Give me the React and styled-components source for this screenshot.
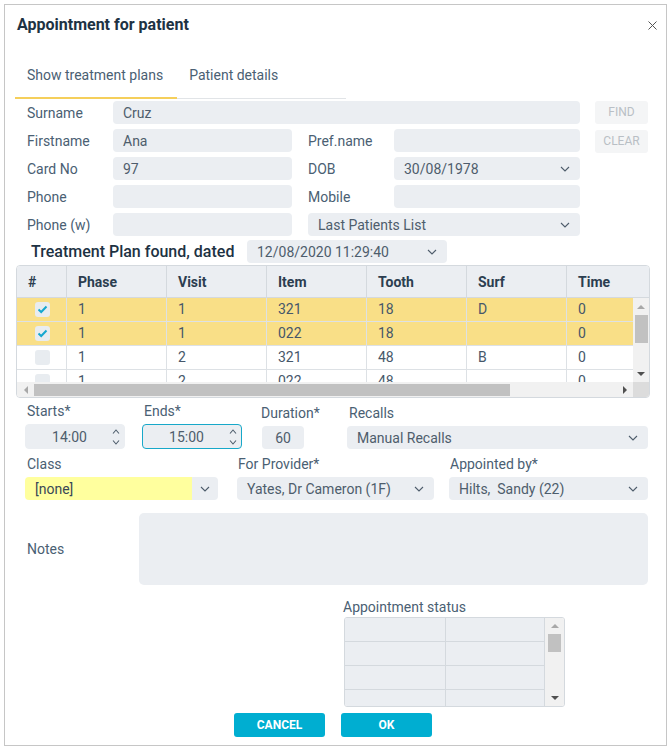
import React from 'react'
import styled, { createGlobalStyle } from 'styled-components'

const GlobalStyle = createGlobalStyle`
  html, body { margin: 0; padding: 0; background: #fff; }
  body { font-family: Roboto, "Liberation Sans", Arial, sans-serif; }
  * { box-sizing: border-box; }
`

const Dialog = styled.div`
  margin: 4px;
  width: 663px;
  height: 742px;
  border: 1px solid #c6c6c6;
  background: #fff;
  display: flex;
  flex-direction: column;
  padding: 0 18px 0 20px;
`

const HeaderBar = styled.div`
  height: 40px;
  display: flex;
  align-items: center;
  justify-content: space-between;
  margin: 0 -9px 0 -8px;
`

const Title = styled.div`
  font-size: 16px;
  font-weight: 700;
  line-height: 20px;
  color: #1d3243;
`

const CloseButton = styled.div`
  width: 10px;
  height: 10px;
  display: flex;
  align-items: center;
  justify-content: center;
`

const TabBar = styled.div`
  display: flex;
  align-items: flex-end;
  height: 54px;
  width: 331px;
  margin-left: -10px;
  border-bottom: 1px solid #e1e4e7;
`

const Tab = styled.div`
  padding: 18px 14px 12px 12px;
  line-height: 20px;
  font-size: 14px;
  color: #4a6073;
  border-bottom: 2px solid ${p => (p.$active ? '#f5cf5b' : 'transparent')};
  margin-bottom: -1px;
`

const FormGrid = styled.div`
  margin-top: 2px;
  margin-left: 2px;
  display: grid;
  grid-template-columns: 86px 179px 16px 86px 186px 15px 53px;
  grid-auto-rows: 23px;
  row-gap: 5px;
  align-items: center;
  grid-template-areas:
    "l1 surname surname surname surname . find"
    "l2 first . l3 pref . clear"
    "l4 card . l5 dob . ."
    "l6 phone . l7 mobile . ."
    "l8 phonew . lpl lpl . .";
`

const Label = styled.div`
  grid-area: ${p => p.$area || 'auto'};
  font-size: 14px;
  line-height: 16px;
  color: #4a6073;
  white-space: nowrap;
`

const Field = styled.div`
  grid-area: ${p => p.$area || 'auto'};
  height: 23px;
  background: #ebeef2;
  border-radius: 4px;
  padding: 0 10px;
  display: flex;
  align-items: center;
  justify-content: space-between;
  font-size: 14px;
  color: #4e5d6c;
  white-space: pre;
`

const GhostButton = styled.div`
  grid-area: ${p => p.$area};
  height: 23px;
  background: #f4f5f6;
  border-radius: 3px;
  display: flex;
  align-items: center;
  justify-content: center;
  font-size: 12px;
  color: #b9bfc5;
  margin-top: ${p => p.$shift || 0}px;
`

const PlanRow = styled.div`
  margin-top: 4px;
  height: 23px;
  display: flex;
  align-items: center;
`

const PlanTitle = styled.div`
  margin-left: 6px;
  width: 216px;
  font-size: 16px;
  font-weight: 500;
  color: #1d3243;
  white-space: nowrap;
`

const PlanSelect = styled(Field)`
  width: 200px;
`

const TableFrame = styled.div`
  margin-top: 2px;
  margin-left: -9px;
  width: 634px;
  height: 133px;
  border: 1px solid #d4d9de;
  border-radius: 4px;
  overflow: hidden;
`

const HeaderRow = styled.div`
  display: grid;
  grid-template-columns: 50px repeat(6, 100px);
  height: 32px;
  background: #ebeef2;
  border-bottom: 1px solid #d4d9de;
  overflow: hidden;
`

const HeadCell = styled.div`
  border-right: 1px solid #d4d9de;
  padding-left: 11px;
  line-height: 32px;
  font-size: 14px;
  font-weight: 700;
  color: #2c3e50;
`

const BodyWrap = styled.div`
  display: grid;
  grid-template-columns: 616px 16px;
  grid-template-rows: 84px 15px;
`

const RowsArea = styled.div`
  overflow: hidden;
`

const Row = styled.div`
  display: grid;
  grid-template-columns: 50px repeat(6, 100px);
  height: 24px;
  background: ${p => (p.$selected ? '#f9df87' : '#fff')};
  border-bottom: 1px solid #dde1e5;
`

const Cell = styled.div`
  border-right: 1px solid #dde1e5;
  line-height: 23px;
  font-size: 14px;
  color: #46576a;
  display: flex;
  align-items: center;
  justify-content: ${p => (p.$center ? 'center' : 'flex-start')};
  padding-left: ${p => (p.$center ? 0 : 11)}px;
`

const CheckBox = styled.div`
  width: 15px;
  height: 15px;
  border-radius: 3px;
  background: #e8ecf0;
  display: flex;
  align-items: center;
  justify-content: center;
  margin-left: 2px;
`

const VScroll = styled.div`
  background: #f1f1f1;
  display: flex;
  flex-direction: column;
  align-items: center;
`

const HScroll = styled.div`
  background: #f1f1f1;
  display: flex;
  align-items: center;
`

const ScrollCorner = styled.div`
  background: #dcdcdc;
`

const ArrowBox = styled.div`
  width: ${p => p.$w || 16}px;
  height: ${p => p.$h || 16}px;
  display: flex;
  align-items: center;
  justify-content: center;
  flex: none;
`

const Triangle = styled.div`
  width: 0;
  height: 0;
  ${p => p.$dir === 'up' && `border-left: 4px solid transparent; border-right: 4px solid transparent; border-bottom: 4px solid ${p.$color};`}
  ${p => p.$dir === 'down' && `border-left: 4px solid transparent; border-right: 4px solid transparent; border-top: 4px solid ${p.$color};`}
  ${p => p.$dir === 'left' && `border-top: 4px solid transparent; border-bottom: 4px solid transparent; border-right: 4px solid ${p.$color};`}
  ${p => p.$dir === 'right' && `border-top: 4px solid transparent; border-bottom: 4px solid transparent; border-left: 4px solid ${p.$color};`}
`

const Thumb = styled.div`
  background: #c1c1c1;
  width: ${p => p.$w}px;
  height: ${p => p.$h}px;
  flex: none;
`

const Spacer = styled.div`
  flex: 1;
`

const ControlsRow = styled.div`
  margin-top: ${p => p.$mt}px;
  display: flex;
  align-items: flex-end;
`

const Group = styled.div`
  display: flex;
  flex-direction: column;
  width: ${p => (p.$w ? `${p.$w}px` : 'auto')};
  flex: ${p => (p.$w ? 'none' : '1')};
  margin-left: ${p => p.$ml || 0}px;
`

const GroupLabel = styled.div`
  font-size: 14px;
  line-height: 16px;
  color: #4a6073;
  white-space: nowrap;
  margin-bottom: 5px;
  margin-left: ${p => (p.$pl === undefined ? 2 : p.$pl)}px;
`

const TimeBox = styled.div`
  height: 25px;
  display: grid;
  grid-template-columns: 85px 1fr;
  align-items: center;
  background: #ebeef2;
  border-radius: 4px;
  border: 1px solid ${p => (p.$focus ? '#17a8c9' : '#ebeef2')};
  font-size: 14px;
  color: #4e5d6c;
`

const TimeText = styled.div`
  text-align: center;
  padding-left: 2px;
`

const Spinner = styled.div`
  display: flex;
  flex-direction: column;
  gap: 6px;
  padding-left: 1px;
`

const SmallBox = styled.div`
  height: 23px;
  background: #ebeef2;
  border-radius: 4px;
  display: flex;
  align-items: center;
  justify-content: center;
  font-size: 14px;
  color: #4e5d6c;
`

const SplitSelect = styled.div`
  height: 23px;
  display: flex;
  border-radius: 4px;
  overflow: hidden;
  font-size: 14px;
  color: #3a4856;
`

const SplitText = styled.div`
  flex: 1;
  background: #ffff9e;
  padding-left: 10px;
  display: flex;
  align-items: center;
`

const SplitButton = styled.div`
  width: 26px;
  background: #ebeef2;
  display: flex;
  align-items: center;
  justify-content: center;
`

const NotesRow = styled.div`
  margin-top: 13px;
  display: flex;
  align-items: center;
`

const NotesLabel = styled.div`
  width: 114px;
  padding-left: 2px;
  font-size: 14px;
  color: #4a6073;
`

const NotesArea = styled.div`
  flex: 1;
  height: 72px;
  background: #ebeef2;
  border-radius: 5px;
`

const StatusBlock = styled.div`
  margin-top: 14px;
  margin-left: 318px;
  display: flex;
  flex-direction: column;
`

const StatusLabel = styled.div`
  font-size: 14px;
  line-height: 16px;
  color: #4a6073;
  margin-bottom: 2px;
`

const StatusGrid = styled.div`
  margin-left: 1px;
  width: 221px;
  height: 90px;
  border: 1px solid #d4d9de;
  border-radius: 3px;
  overflow: hidden;
  display: grid;
  grid-template-columns: 1fr 19px;
`

const StatusRows = styled.div`
  overflow: hidden;
  border-right: 1px solid #d4d9de;
`

const StatusRow = styled.div`
  display: grid;
  grid-template-columns: 101px 1fr;
  height: 24px;
  border-bottom: 1px solid #d4d9de;
`

const StatusCell = styled.div`
  background: #ebeef2;
  border-right: ${p => (p.$last ? 'none' : '1px solid #d4d9de')};
`

const ButtonRow = styled.div`
  margin-top: 6px;
  padding-left: 209px;
  display: flex;
  gap: 16px;
`

const PrimaryButton = styled.div`
  width: 91px;
  height: 24px;
  border-radius: 3px;
  background: #00aed1;
  color: #fff;
  font-size: 12px;
  font-weight: 700;
  display: flex;
  align-items: center;
  justify-content: center;
`

function Chevron({ color = '#4e5d6c', up, small }) {
  const w = small ? 8 : 10
  const h = small ? 5 : 6
  const pts = small
    ? up ? '1,4.5 4,1 7,4.5' : '1,0.5 4,4 7,0.5'
    : up ? '1,5 5,1 9,5' : '1,1 5,5 9,1'
  return (
    <svg width={w} height={h} viewBox={`0 0 ${w} ${h}`}>
      <polyline points={pts} fill="none" stroke={color} strokeWidth="1.1" />
    </svg>
  )
}

function Check() {
  return (
    <svg width="11" height="9" viewBox="0 0 11 9">
      <polyline points="1.5,4.5 4.2,7 9.5,1.5" fill="none" stroke="#15a7cf" strokeWidth="2" />
    </svg>
  )
}

function Select({ area, value, className }) {
  return (
    <Field $area={area} className={className}>
      <span>{value}</span>
      <Chevron />
    </Field>
  )
}

function TimeInput({ value, focus }) {
  return (
    <TimeBox $focus={focus}>
      <TimeText>{value}</TimeText>
      <Spinner>
        <Chevron up small />
        <Chevron small />
      </Spinner>
    </TimeBox>
  )
}

const columns = ['#', 'Phase', 'Visit', 'Item', 'Tooth', 'Surf', 'Time']

const rows = [
  { checked: true, cells: ['1', '1', '321', '18', 'D', '0'] },
  { checked: true, cells: ['1', '1', '022', '18', '', '0'] },
  { checked: false, cells: ['1', '2', '321', '48', 'B', '0'] },
  { checked: false, cells: ['1', '2', '022', '48', '', '0'] },
]

export default function App() {
  return (
    <>
      <GlobalStyle />
      <Dialog>
        <HeaderBar>
          <Title>Appointment for patient</Title>
          <CloseButton>
            <svg width="9" height="9" viewBox="0 0 9 9">
              <path d="M0.5 0.5 L8.5 8.5 M8.5 0.5 L0.5 8.5" stroke="#555" strokeWidth="1" />
            </svg>
          </CloseButton>
        </HeaderBar>

        <TabBar>
          <Tab $active>Show treatment plans</Tab>
          <Tab>Patient details</Tab>
        </TabBar>

        <FormGrid>
          <Label $area="l1">Surname</Label>
          <Field $area="surname">Cruz</Field>
          <GhostButton $area="find" $shift={-1}>FIND</GhostButton>

          <Label $area="l2">Firstname</Label>
          <Field $area="first">Ana</Field>
          <Label $area="l3">Pref.name</Label>
          <Field $area="pref" />
          <GhostButton $area="clear" $shift={1}>CLEAR</GhostButton>

          <Label $area="l4">Card No</Label>
          <Field $area="card">97</Field>
          <Label $area="l5">DOB</Label>
          <Select area="dob" value="30/08/1978" />

          <Label $area="l6">Phone</Label>
          <Field $area="phone" />
          <Label $area="l7">Mobile</Label>
          <Field $area="mobile" />

          <Label $area="l8">Phone (w)</Label>
          <Field $area="phonew" />
          <Select area="lpl" value="Last Patients List" />
        </FormGrid>

        <PlanRow>
          <PlanTitle>Treatment Plan found, dated</PlanTitle>
          <PlanSelect>
            <span>12/08/2020 11:29:40</span>
            <Chevron />
          </PlanSelect>
        </PlanRow>

        <TableFrame>
          <HeaderRow>
            {columns.map(c => (
              <HeadCell key={c}>{c}</HeadCell>
            ))}
          </HeaderRow>
          <BodyWrap>
            <RowsArea>
              {rows.map((r, i) => (
                <Row key={i} $selected={r.checked}>
                  <Cell $center>
                    <CheckBox>{r.checked && <Check />}</CheckBox>
                  </Cell>
                  {r.cells.map((c, j) => (
                    <Cell key={j}>{c}</Cell>
                  ))}
                </Row>
              ))}
            </RowsArea>
            <VScroll>
              <ArrowBox $h={17}>
                <Triangle $dir="up" $color="#a8a8a8" />
              </ArrowBox>
              <Thumb $w={13} $h={28} />
              <Spacer />
              <ArrowBox $h={17}>
                <Triangle $dir="down" $color="#505050" />
              </ArrowBox>
            </VScroll>
            <HScroll>
              <ArrowBox $w={17} $h={15}>
                <Triangle $dir="left" $color="#a8a8a8" />
              </ArrowBox>
              <Thumb $w={476} $h={12} />
              <Spacer />
              <ArrowBox $w={17} $h={15}>
                <Triangle $dir="right" $color="#505050" />
              </ArrowBox>
            </HScroll>
            <ScrollCorner />
          </BodyWrap>
        </TableFrame>

        <ControlsRow $mt={5}>
          <Group $w={100}>
            <GroupLabel>Starts*</GroupLabel>
            <TimeInput value="14:00" />
          </Group>
          <Group $w={100} $ml={17}>
            <GroupLabel>Ends*</GroupLabel>
            <TimeInput value="15:00" focus />
          </Group>
          <Group $w={42} $ml={20}>
            <GroupLabel $pl={-1}>Duration*</GroupLabel>
            <SmallBox>60</SmallBox>
          </Group>
          <Group $ml={43}>
            <GroupLabel>Recalls</GroupLabel>
            <Select value="Manual Recalls" />
          </Group>
        </ControlsRow>

        <ControlsRow $mt={7}>
          <Group $w={193}>
            <GroupLabel>Class</GroupLabel>
            <SplitSelect>
              <SplitText>[none]</SplitText>
              <SplitButton>
                <Chevron />
              </SplitButton>
            </SplitSelect>
          </Group>
          <Group $w={197} $ml={19}>
            <GroupLabel $pl={1}>For Provider*</GroupLabel>
            <Select value="Yates, Dr Cameron (1F)" />
          </Group>
          <Group $ml={15}>
            <GroupLabel $pl={1}>Appointed by*</GroupLabel>
            <Select value="Hilts,  Sandy (22)" />
          </Group>
        </ControlsRow>

        <NotesRow>
          <NotesLabel>Notes</NotesLabel>
          <NotesArea />
        </NotesRow>

        <StatusBlock>
          <StatusLabel>Appointment status</StatusLabel>
          <StatusGrid>
            <StatusRows>
              {[0, 1, 2, 3].map(i => (
                <StatusRow key={i}>
                  <StatusCell />
                  <StatusCell $last />
                </StatusRow>
              ))}
            </StatusRows>
            <VScroll>
              <ArrowBox $w={18} $h={16}>
                <Triangle $dir="up" $color="#a8a8a8" />
              </ArrowBox>
              <Thumb $w={13} $h={18} />
              <Spacer />
              <ArrowBox $w={18} $h={16}>
                <Triangle $dir="down" $color="#505050" />
              </ArrowBox>
            </VScroll>
          </StatusGrid>
        </StatusBlock>

        <ButtonRow>
          <PrimaryButton>CANCEL</PrimaryButton>
          <PrimaryButton>OK</PrimaryButton>
        </ButtonRow>
      </Dialog>
    </>
  )
}
